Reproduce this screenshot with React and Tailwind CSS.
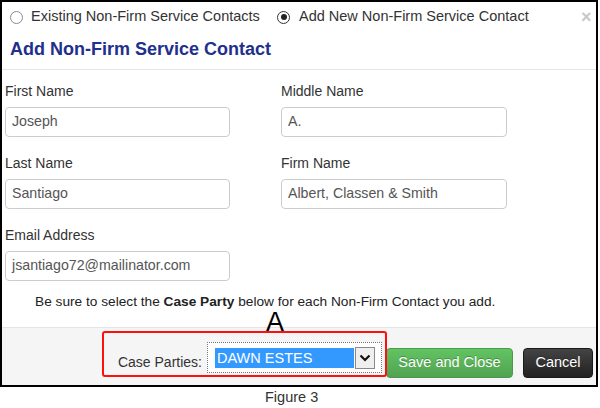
export default function App() {
  const Field = ({ label, value, className = "" }) => (
    <div className={"flex flex-col " + className}>
      <div className="h-[20px] leading-[20px] text-[14px] text-[#333]">{label}</div>
      <div className="mt-[6px] h-[30px] rounded-[4px] border border-[#ccc] bg-white flex items-center pl-[6px] text-[14.2px] text-[#555]">
        {value}
      </div>
    </div>
  );

  return (
    <div
      className="w-[600px] h-[408px] bg-white relative overflow-hidden"
      style={{ fontFamily: '"Liberation Sans", Arial, sans-serif' }}
    >
      <div className="w-[598px] h-[387px] border-2 border-black flex flex-col relative bg-white">
        {/* radio row */}
        <div className="h-[30px] flex items-center text-[14.5px] text-[#333] relative shrink-0">
          <div className="w-[275px] flex items-center">
            <span className="ml-[8px] w-[13px] h-[13px] rounded-full border border-[#8a8a8a] bg-white" />
            <span className="ml-[8px]">Existing Non-Firm Service Contacts</span>
          </div>
          <span className="w-[13px] h-[13px] rounded-full border border-[#333] bg-white flex items-center justify-center">
            <span className="w-[6px] h-[6px] rounded-full bg-[#222]" />
          </span>
          <span className="ml-[9px]">Add New Non-Firm Service Contact</span>
          <span className="absolute left-[579px] top-[3px] text-[18px] font-bold text-[#c8c8c8] leading-[24px]">×</span>
        </div>

        {/* heading */}
        <div className="h-[38px] pb-[2px] flex items-center pl-[8px] border-b border-[#e5e5e5] shrink-0">
          <span className="text-[18px] font-bold text-[#21308c]">Add Non-Firm Service Contact</span>
        </div>

        {/* body */}
        <div className="flex-1 pt-[11px] pl-[3px]">
          <div className="flex">
            <Field label="First Name" value="Joseph" className="w-[225px]" />
            <Field label="Middle Name" value="A." className="w-[226px] ml-[51px]" />
          </div>
          <div className="flex mt-[16px]">
            <Field label="Last Name" value="Santiago" className="w-[225px]" />
            <Field label="Firm Name" value="Albert, Classen & Smith" className="w-[226px] ml-[51px]" />
          </div>
          <div className="flex mt-[16px]">
            <Field label="Email Address" value="jsantiago72@mailinator.com" className="w-[225px]" />
          </div>
          <div className="mt-[11px] pl-[30px] h-[20px] leading-[20px] text-[13.7px] text-[#222]">
            Be sure to select the <b>Case Party</b> below for each Non-Firm Contact you add.
          </div>
        </div>

        {/* footer */}
        <div className="h-[58px] border-t border-[#e5e5e5] bg-[#f5f5f5] flex justify-end items-start pr-[3px] shrink-0">
          <span className="mt-[24px] h-[20px] leading-[20px] text-[14px] text-[#333]">Case Parties:</span>
          <div className="mt-[14px] ml-[5px] w-[175px] h-[31px] border border-dotted border-[#777] bg-white flex items-center pl-[7px]">
            <span className="w-[139px] h-[20px] leading-[20px] bg-[#3399ff] text-white text-[14.5px] pl-[2px]">DAWN ESTES</span>
            <span className="ml-[1px] w-[20px] h-[22px] border border-[#8a8a8a] bg-[#efefef] flex items-center justify-center">
              <svg width="12" height="8" viewBox="0 0 12 8">
                <path d="M1.5 1.5 L6 6 L10.5 1.5" fill="none" stroke="#111" strokeWidth="2.2" />
              </svg>
            </span>
          </div>
          <button className="mt-[20px] ml-[4px] w-[127px] h-[30px] rounded-[4px] bg-linear-to-b from-[#62c462] to-[#51a351] border border-[#4b9a4b] text-white text-[14.5px] [text-shadow:0_-1px_0_rgba(0,0,0,0.25)]">
            Save and Close
          </button>
          <button className="mt-[20px] ml-[10px] w-[70px] h-[30px] rounded-[4px] bg-linear-to-b from-[#444] to-[#222] border border-[#1a1a1a] text-white text-[14.5px] [text-shadow:0_-1px_0_rgba(0,0,0,0.25)]">
            Cancel
          </button>
        </div>
      </div>

      {/* annotation */}
      <div className="absolute left-[102px] top-[331px] w-[285px] h-[46px] border-2 border-[#ff1010] rounded-[3px] pointer-events-none" />
      <span className="absolute left-[266px] top-[312px] text-[27px] leading-[20px] text-black">A</span>

      {/* caption */}
      <div className="h-[21px] flex items-center">
        <span className="ml-[265px] text-[14.5px] text-[#333]">Figure 3</span>
      </div>
    </div>
  );
}
